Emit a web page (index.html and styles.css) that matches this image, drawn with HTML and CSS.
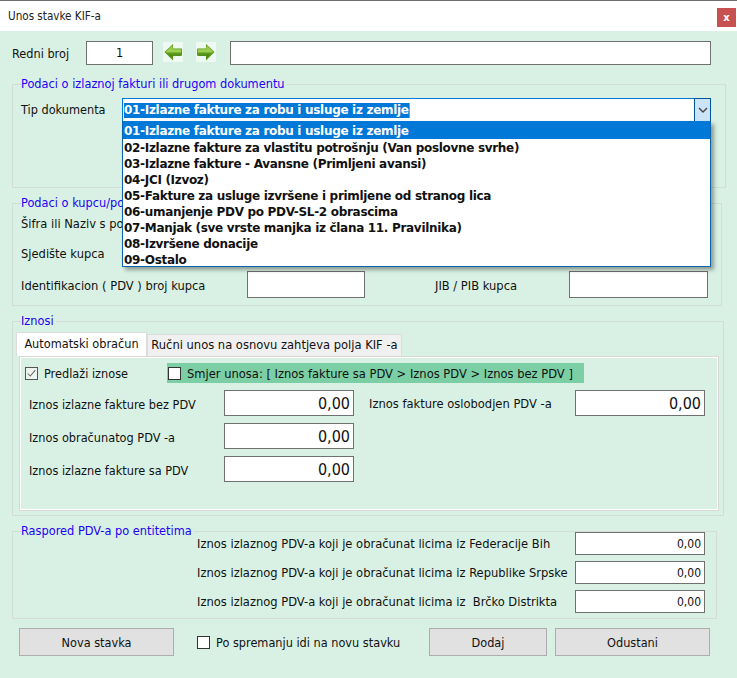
FILE: index.html
```html
<!DOCTYPE html>
<html lang="bs">
<head>
<meta charset="utf-8">
<title>Unos stavke KIF-a</title>
<link rel="stylesheet" href="styles.css">
</head>
<body>
<div class="window">
  <header class="titlebar">
    <span class="title">Unos stavke KIF-a</span>
    <button class="close">x</button>
  </header>

  <div class="top-row">
    <span class="lbl rb-label">Redni broj</span>
    <div class="box rb-box">1</div>
    <svg class="arrow arrow-left" viewBox="0 0 20 20"><rect width="20" height="20" fill="#eef9f2"/><path d="M1.500 10 10 2V6.500H18.500Q19 6.500 19 7.500V12.500Q19 14 18 14H10V18.500Z" fill="#5b9a1c"/><path d="M3 9.500 9.500 3.500V7.200H18.200V10.500H3.600Z" fill="#9ccf4e"/><path d="M6 13 9.500 16V13.500H17V12.500H6Z" fill="#4b8a14"/></svg>
    <svg class="arrow arrow-right" viewBox="0 0 20 20"><rect width="20" height="20" fill="#eef9f2"/><path d="M18.500 10 10 2V6.500H1.500Q1 6.500 1 7.500V12.500Q1 14 2 14H10V18.500Z" fill="#5b9a1c"/><path d="M17 9.500 10.500 3.500V7.200H1.800V10.500H16.400Z" fill="#9ccf4e"/><path d="M14 13 10.500 16V13.500H3V12.500H14Z" fill="#4b8a14"/></svg>
    <div class="box wide-box"></div>
  </div>

  <section class="group g-doc">
    <span class="legend">Podaci o izlaznoj fakturi ili drugom dokumentu</span>
    <div class="doc-row">
      <span class="lbl doc-label">Tip dokumenta</span>
      <div class="combo">
        <span class="combo-text"><span class="sel">01-Izlazne fakture za robu i usluge iz zemlje</span><i class="caret"></i></span>
        <span class="combo-btn"><svg viewBox="0 0 10 6" width="10" height="6"><path d="M1 1 5 5 9 1" fill="none" stroke="#444" stroke-width="1.400"/></svg></span>
        <ul class="list">
          <li class="active">01-Izlazne fakture za robu i usluge iz zemlje</li>
          <li>02-Izlazne fakture za vlastitu potrošnju (Van poslovne svrhe)</li>
          <li>03-Izlazne fakture - Avansne (Primljeni avansi)</li>
          <li>04-JCI (Izvoz)</li>
          <li>05-Fakture za usluge izvršene i primljene od stranog lica</li>
          <li>06-umanjenje PDV po PDV-SL-2 obrascima</li>
          <li>07-Manjak (sve vrste manjka iz člana 11. Pravilnika)</li>
          <li>08-Izvršene donacije</li>
          <li>09-Ostalo</li>
        </ul>
      </div>
    </div>
  </section>

  <section class="group g-buyer">
    <span class="legend">Podaci o kupcu/po</span>
    <div class="lbl buyer-line l1">Šifra ili Naziv s po</div>
    <div class="lbl buyer-line l2">Sjedište kupca</div>
    <div class="buyer-ids">
      <span class="lbl id-label">Identifikacion ( PDV ) broj kupca</span>
      <div class="box id-box"></div>
      <span class="lbl jib-label">JIB / PIB kupca</span>
      <div class="box jib-box"></div>
    </div>
  </section>

  <section class="group g-sums">
    <span class="legend">Iznosi</span>
    <div class="tabs">
      <span class="tab tab-on">Automatski obračun</span>
      <span class="tab tab-off">Ručni unos na osnovu zahtjeva polja KIF -a</span>
    </div>
    <div class="panel">
      <div class="check-row">
        <label class="lbl check-one"><span class="cb cb-on"><svg viewBox="0 0 13 13" width="11" height="11"><path d="M2 6.500 5 9.500 11 2.500" fill="none" stroke="#666" stroke-width="1.200"/></svg></span>Predlaži iznose</label>
        <label class="lbl band"><span class="cb"></span>Smjer unosa: [ Iznos fakture sa PDV &gt; Iznos PDV &gt; Iznos bez PDV ]</label>
      </div>
      <div class="sum-grid">
        <div class="sum-col">
          <div class="sum-row"><span class="lbl sum-label">Iznos izlazne fakture bez PDV</span><div class="box amount">0,00</div></div>
          <div class="sum-row"><span class="lbl sum-label">Iznos obračunatog PDV -a</span><div class="box amount">0,00</div></div>
          <div class="sum-row"><span class="lbl sum-label">Iznos izlazne fakture sa PDV</span><div class="box amount">0,00</div></div>
        </div>
        <div class="sum-row right-row"><span class="lbl right-label">Iznos fakture oslobodjen PDV -a</span><div class="box amount">0,00</div></div>
      </div>
    </div>
  </section>

  <section class="group g-entity">
    <span class="legend">Raspored PDV-a po entitetima</span>
    <div class="ent-row"><span class="lbl ent-label">Iznos izlaznog PDV-a koji je obračunat licima iz Federacije Bih</span><div class="box small-amount">0,00</div></div>
    <div class="ent-row"><span class="lbl ent-label">Iznos izlaznog PDV-a koji je obračunat licima iz Republike Srpske</span><div class="box small-amount">0,00</div></div>
    <div class="ent-row"><span class="lbl ent-label">Iznos izlaznog PDV-a koji je obračunat licima iz&nbsp; Brčko Distrikta</span><div class="box small-amount">0,00</div></div>
  </section>

  <footer class="actions">
    <button class="btn btn-new">Nova stavka</button>
    <label class="lbl next-check"><span class="cb"></span>Po spremanju idi na novu stavku</label>
    <button class="btn btn-add">Dodaj</button>
    <button class="btn btn-cancel">Odustani</button>
  </footer>
</div>
</body>
</html>
```

FILE: styles.css
```css
* { box-sizing: border-box; }
html, body { margin: 0; padding: 0; }
body {
  width: 737px;
  height: 678px;
  overflow: hidden;
  background: #d9f1e4;
  font-family: "DejaVu Sans Condensed", "DejaVu Sans", sans-serif;
  font-stretch: condensed;
  font-size: 12px;
  color: #111;
}
.window { width: 737px; height: 678px; border-top: 1px solid #6e6e6e; }

.titlebar {
  height: 30px;
  background: #fff;
  display: flex;
  align-items: center;
  justify-content: space-between;
  padding: 0 1px 0 8px;
}
.title { font-size: 11.600px; color: #222; }
.close {
  width: 19px;
  height: 19px;
  margin-top: 2px;
  padding: 0;
  border: 0;
  background: #c75050;
  color: #fff;
  font: bold 10px "DejaVu Sans", sans-serif;
}

.lbl { font-size: 12.800px; color: #111; white-space: nowrap; }
.box {
  background: #fff;
  border: 1px solid #707070;
}

.top-row {
  display: flex;
  align-items: center;
  height: 24px;
  margin-top: 10px;
  padding-left: 12px;
}
.rb-label { width: 74px; font-size: 12.600px; }
.rb-box {
  width: 67px;
  height: 24px;
  text-align: center;
  line-height: 22px;
  font-size: 12.600px;
}
.arrow { width: 20px; height: 20px; margin-bottom: 2px; }
.arrow-left { margin-left: 10px; }
.arrow-right { margin-left: 13px; }
.wide-box { width: 481px; height: 24px; margin-left: 14px; }

.group {
  position: relative;
  margin-left: 12px;
  border: 1px solid #d3dcd7;
}
.legend {
  position: absolute;
  left: 8px;
  top: -9px;
  padding: 0 2px 0 0;
  line-height: 16px;
  background: #d9f1e4;
  color: #2200f5;
  font-size: 12.650px;
  white-space: nowrap;
}

.g-doc { width: 714px; height: 104px; margin-top: 19px; padding: 13px 0 0 8px; }
.doc-row { display: flex; align-items: flex-start; }
.doc-label { width: 101px; line-height: 24px; font-size: 12.600px; }
.combo {
  position: relative;
  width: 589px;
  height: 24px;
  display: flex;
  background: #fff;
  border: 1px solid #0078d7;
}
.combo-text {
  flex: 1;
  display: flex;
  align-items: center;
  padding-left: 1px;
  font: bold 12px "DejaVu Sans", sans-serif;
  letter-spacing: -0.310px;
}
.sel { background: #0078d7; color: #fff; line-height: 15px; }
.caret { width: 1px; height: 15px; background: #f08020; }
.combo-btn {
  width: 17px;
  margin: -1px -1px -1px 0;
  display: flex;
  align-items: center;
  justify-content: center;
  background: #cce4f7;
  border: 1px solid #005499;
}
.list {
  position: absolute;
  z-index: 5;
  left: -1px;
  top: 22px;
  width: 589px;
  height: 146px;
  margin: 0;
  padding: 0;
  list-style: none;
  background: #fff;
  border: 1px solid #0a64ad;
  border-top: 0;
  box-shadow: 3px 3px 4px rgba(0, 0, 0, .35);
  font: bold 12px/18px "DejaVu Sans", sans-serif;
  letter-spacing: -0.310px;
  color: #111;
}
.list li { height: 16px; padding-left: 1px; white-space: nowrap; }
.list .active { height: 18px; line-height: 20px; background: #0078d7; color: #fff; }

.g-buyer { width: 710px; height: 103px; margin-top: 15px; padding-left: 8px; }
.buyer-line { line-height: 16px; }
.l1 { margin-top: 12px; }
.l2 { margin-top: 14px; }
.buyer-ids { display: flex; align-items: flex-start; height: 27px; margin-top: 9px; }
.id-label { width: 226px; line-height: 29px; }
.id-box { width: 118px; height: 27px; }
.jib-label { margin-left: 70px; width: 134px; line-height: 29px; }
.jib-box { width: 139px; height: 27px; }

.g-sums { width: 712px; height: 195px; margin-top: 15px; padding: 10px 0 0 3px; }
.tabs { display: flex; align-items: flex-end; height: 24px; }
.tab { display: block; white-space: nowrap; text-align: center; font-size: 12.600px; color: #111; }
.tab-on {
  width: 131px;
  height: 24px;
  line-height: 22px;
  background: #fff;
  border: 1px solid #dcdcdc;
  border-bottom: 0;
}
.tab-off {
  width: 255px;
  height: 22px;
  line-height: 20px;
  font-size: 12.800px;
  background: #f0f0f0;
  border: 1px solid #dcdcdc;
  border-bottom: 0;
}
.panel {
  width: 700px;
  height: 155px;
  margin-left: 3px;
  padding: 5px 0 0 4px;
  border: 2px solid #fff;
  outline: 1px solid #d8d8d8;
  outline-offset: -1px;
  background: #d9f1e4;
}
.check-row { display: flex; align-items: center; height: 20px; }
.check-one { display: flex; align-items: center; gap: 6px; width: 142px; font-size: 12.600px; }
.cb {
  display: inline-flex;
  align-items: center;
  justify-content: center;
  flex: none;
  width: 13px;
  height: 13px;
  background: #fff;
  border: 1px solid #333;
}
.cb-on { background: #eef5f1; border-color: #555; }
.band {
  display: flex;
  align-items: center;
  gap: 6px;
  width: 417px;
  height: 20px;
  padding-left: 1px;
  background: #7ccfa4;
}
.sum-grid { display: flex; margin-top: 7px; padding-left: 4px; }
.sum-col { width: 340px; display: flex; flex-direction: column; gap: 7px; }
.sum-row { display: flex; align-items: center; }
.sum-label { width: 195px; padding-top: 2px; font-size: 12.600px; }
.amount {
  width: 130px;
  height: 26px;
  padding-right: 3px;
  text-align: right;
  line-height: 25px;
  font-size: 16px;
  color: #111;
}
.right-row { align-items: flex-start; height: 26px; }
.right-label { width: 206px; line-height: 28px; }

.g-entity { width: 705px; height: 88px; margin-top: 15px; padding: 0 0 0 184px; }
.ent-row { display: flex; align-items: center; height: 23px; margin-bottom: 6px; }
.ent-label { width: 378px; }
.small-amount {
  width: 130px;
  height: 23px;
  padding-right: 3px;
  text-align: right;
  line-height: 22px;
  font-size: 12px;
}

.actions {
  display: flex;
  align-items: center;
  height: 28px;
  margin-top: 9px;
  padding-left: 19px;
}
.btn {
  height: 28px;
  padding: 0;
  background: #e1e1e1;
  border: 1px solid #adadad;
  color: #111;
  font: 12.600px "DejaVu Sans Condensed", "DejaVu Sans", sans-serif;
  font-stretch: condensed;
}
.btn-new { width: 155px; }
.next-check { display: flex; align-items: center; gap: 6px; width: 232px; margin-left: 23px; font-size: 12.600px; }
.btn-add { width: 118px; }
.btn-cancel { width: 155px; margin-left: 8px; }
```
